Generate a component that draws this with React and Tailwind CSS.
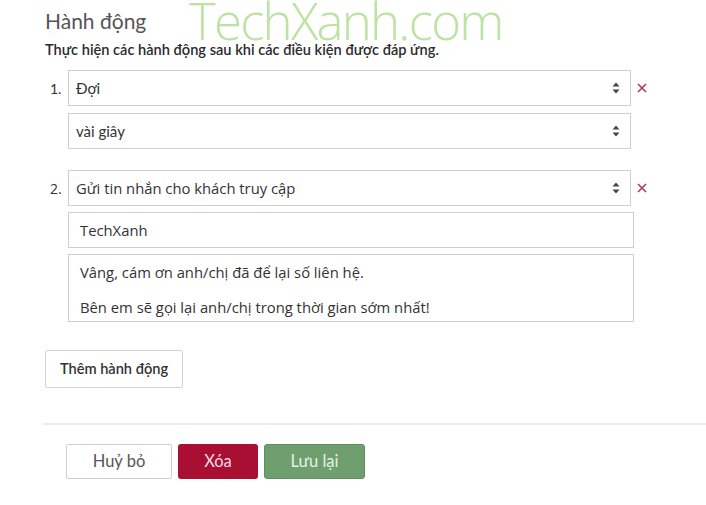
const lato = "font-['Lato','Liberation_Sans',sans-serif]";
const open = "font-['Open_Sans','Liberation_Sans',sans-serif]";

function Arrows() {
  return (
    <svg width="8" height="12" viewBox="0 0 8 12" className="shrink-0">
      <path d="M4 0.5 L7.5 4.5 H0.5 Z" fill="#444" />
      <path d="M4 11.5 L7.5 7.5 H0.5 Z" fill="#444" />
    </svg>
  );
}

function Select({ children, font = lato, size = "text-[15px]" }) {
  return (
    <div className={`flex items-center justify-between h-[36px] w-[563px] border border-[#cfcfcf] bg-white pl-[7px] pr-[10px] ${size} text-[#333] ${font}`}>
      <span>{children}</span>
      <Arrows />
    </div>
  );
}

function Remove() {
  return (
    <svg width="10" height="10" viewBox="0 0 10 10" className="ml-[6px]">
      <path d="M1 1 L9 9 M9 1 L1 9" stroke="#b23a5c" strokeWidth="1.6" />
    </svg>
  );
}

export default function App() {
  return (
    <div className="w-[706px] h-[505px] bg-white overflow-hidden relative">
      <div className="px-[45px] pt-[5px]">
        <div className="flex items-end h-[28px]">
          <h2 className={`text-[21px] leading-[24px] text-[#555] ${lato}`}>Hành động</h2>
        </div>
        <p className={`mt-[9px] text-[14.6px] leading-[16px] font-semibold text-[#2b2b2b] ${lato}`}>
          Thực hiện các hành động sau khi các điều kiện được đáp ứng.
        </p>
      </div>
      <div className={`absolute left-[189px] top-0 text-[51px] leading-[41px] font-light tracking-[-1.8px] text-[#bde3a4] pointer-events-none ${open}`}>TechXanh.com</div>

      <div className="pl-[50px] mt-[12px]">
        <div className="flex items-center">
          <span className={`w-[18px] text-[14px] text-[#333] ${lato}`}>1.</span>
          <Select>Đợi</Select>
          <Remove />
        </div>
        <div className="pl-[18px] mt-[7px]">
          <Select>vài giây</Select>
        </div>

        <div className="flex items-center mt-[21px]">
          <span className={`w-[18px] text-[14px] text-[#333] ${open}`}>2.</span>
          <Select font={open} size="text-[14.8px]">Gửi tin nhắn cho khách truy cập</Select>
          <Remove />
        </div>
        <div className="pl-[18px] mt-[6px]">
          <div className={`h-[36px] w-[566px] border border-[#cfcfcf] flex items-center px-[11px] text-[14.8px] text-[#333] ${open}`}>TechXanh</div>
          <div className={`mt-[6px] h-[68px] w-[566px] border border-[#cfcfcf] px-[11px] pt-[6px] text-[14.8px] text-[#333] ${open}`}>
            <div className="leading-[22px]">Vâng, cám ơn anh/chị đã để lại số liên hệ.</div>
            <div className="leading-[22px] mt-[13px]">Bên em sẽ gọi lại anh/chị trong thời gian sớm nhất!</div>
          </div>
        </div>
      </div>

      <div className="pl-[45px] mt-[28px]">
        <button className={`h-[38px] w-[138px] border border-[#d4d4d4] rounded-[2px] bg-white text-[14.6px] font-semibold text-[#333] ${lato}`}>Thêm hành động</button>
      </div>

      <div className="ml-[43px] mt-[35px] border-t-2 border-[#ececec]"></div>

      <div className={`flex gap-[6px] pl-[66px] mt-[19px] ${lato}`}>
        <button className="h-[35px] w-[106px] border border-[#cfcfcf] rounded-[2px] bg-white text-[16.5px] text-[#555]">Huỷ bỏ</button>
        <button className="h-[35px] w-[80px] rounded-[3px] bg-[#a80f32] text-[16.5px] text-[#f3dde2]">Xóa</button>
        <button className="h-[35px] w-[101px] rounded-[3px] bg-[#6f9f6f] border border-[#5f8f5f] text-[16.5px] text-[#e6f1e4]">Lưu lại</button>
      </div>
    </div>
  );
}
